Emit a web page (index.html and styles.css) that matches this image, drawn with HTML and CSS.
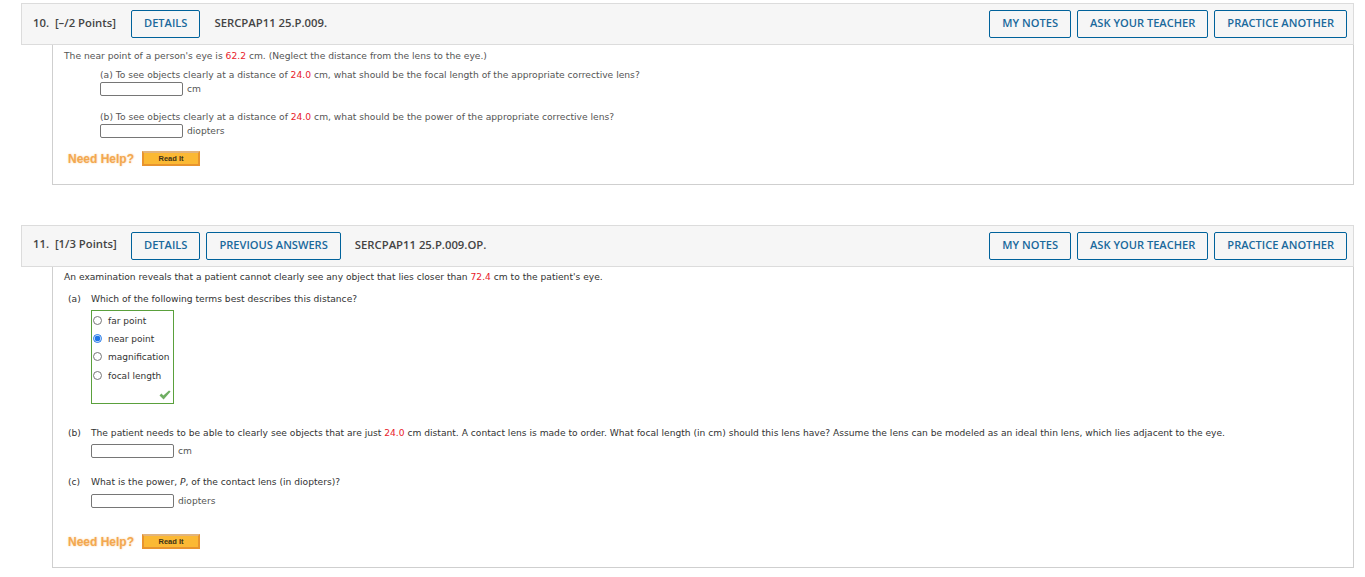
FILE: index.html
```html
<!DOCTYPE html>
<html lang="en">
<head>
<meta charset="utf-8">
<title>Questions</title>
<link rel="stylesheet" href="styles.css">
</head>
<body>
<section class="question q10">
  <header class="qhead">
    <span class="qnum">10.&nbsp; [–/2 Points]</span>
    <a class="btn">DETAILS</a>
    <span class="qcode">SERCPAP11 25.P.009.</span>
    <span class="spacer"></span>
    <a class="btn">MY NOTES</a>
    <a class="btn">ASK YOUR TEACHER</a>
    <a class="btn">PRACTICE ANOTHER</a>
  </header>
  <div class="qbody">
    <p class="intro">The near point of a person's eye is <b class="val">62.2</b> cm. (Neglect the distance from the lens to the eye.)</p>
    <div class="part-a1">
      <p class="ptext">(a) To see objects clearly at a distance of <b class="val">24.0</b> cm, what should be the focal length of the appropriate corrective lens?</p>
      <div class="ansline"><span class="field"></span><span class="unit">cm</span></div>
    </div>
    <div class="part-a2">
      <p class="ptext">(b) To see objects clearly at a distance of <b class="val">24.0</b> cm, what should be the power of the appropriate corrective lens?</p>
      <div class="ansline"><span class="field"></span><span class="unit">diopters</span></div>
    </div>
    <div class="help help1">
      <span class="need">Need Help?</span>
      <span class="readit"><span>Read It</span></span>
    </div>
  </div>
</section>

<section class="question q11">
  <header class="qhead">
    <span class="qnum">11.&nbsp; [1/3 Points]</span>
    <a class="btn">DETAILS</a>
    <a class="btn">PREVIOUS ANSWERS</a>
    <span class="qcode">SERCPAP11 25.P.009.OP.</span>
    <span class="spacer"></span>
    <a class="btn">MY NOTES</a>
    <a class="btn">ASK YOUR TEACHER</a>
    <a class="btn">PRACTICE ANOTHER</a>
  </header>
  <div class="qbody">
    <p class="intro dark">An examination reveals that a patient cannot clearly see any object that lies closer than <b class="val">72.4</b> cm to the patient's eye.</p>
    <div class="row row-a">
      <span class="plabel">(a)</span>
      <div class="pcontent">
        <p class="ptext dark">Which of the following terms best describes this distance?</p>
        <div class="choices">
          <label class="choice"><span class="radio"></span>far point</label>
          <label class="choice"><span class="radio on"></span>near point</label>
          <label class="choice"><span class="radio"></span>magnification</label>
          <label class="choice last"><span class="radio"></span>focal length</label>
          <svg class="check" viewBox="0 0 12 10" width="12" height="10"><path d="M0.5 5.4 L2.4 3.6 L4.4 5.4 L10 0.4 L11.6 1.6 L4.6 9.6 Z" fill="#6fae62"/></svg>
        </div>
      </div>
    </div>
    <div class="row row-b">
      <span class="plabel">(b)</span>
      <div class="pcontent">
        <p class="ptext dark">The patient needs to be able to clearly see objects that are just <b class="val">24.0</b> cm distant. A contact lens is made to order. What focal length (in cm) should this lens have? Assume the lens can be modeled as an ideal thin lens, which lies adjacent to the eye.</p>
        <div class="ansline gap"><span class="field"></span><span class="unit">cm</span></div>
      </div>
    </div>
    <div class="row row-c">
      <span class="plabel">(c)</span>
      <div class="pcontent">
        <p class="ptext dark">What is the power, <i>P</i>, of the contact lens (in diopters)?</p>
        <div class="ansline gap2"><span class="field"></span><span class="unit">diopters</span></div>
      </div>
    </div>
    <div class="help help2">
      <span class="need">Need Help?</span>
      <span class="readit"><span>Read It</span></span>
    </div>
  </div>
</section>
</body>
</html>
```
FILE: styles.css
```css
* { box-sizing: border-box; }
html, body { margin: 0; padding: 0; background: #fff; }
body {
  padding: 3px 11px 0 21px;
  font-family: "DejaVu Sans", Verdana, sans-serif;
  font-size: 9.17px;
  color: #555;
  overflow: hidden;
}
p { margin: 0; }
.question { display: block; }
.q11 { margin-top: 40px; font-size: 9.15px; }

.qhead {
  display: flex;
  align-items: center;
  height: 42px;
  padding: 0 6px 0 11px;
  gap: 6px;
  background: #f6f6f6;
  border: 1px solid #dcdcdc;
}
.qnum, .qcode {
  font-family: "Open Sans", sans-serif;
  font-size: 11.3px;
  font-weight: 600;
  color: #444;
}
.qnum { width: 92px; padding-bottom: 3px; white-space: nowrap; }
.q11 .qnum { padding-bottom: 5px; }
.qcode { margin-left: 8px; padding-bottom: 3px; }
.spacer { flex: 1; }
.btn {
  display: flex;
  align-items: center;
  height: 28px;
  padding: 0 12px 3px;
  font-family: "Open Sans", sans-serif;
  font-size: 11.1px;
  font-weight: 600;
  color: #1a699c;
  background: #f6f6f6;
  border: 1px solid #00629b;
  border-radius: 2px;
  white-space: nowrap;
}

.qbody {
  margin: 0 0 0 31px;
  padding: 0 0 0 11px;
  border: 1px solid #cfcfcf;
  border-top: 0;
  background: #fff;
}
.q10 .qbody { height: 140px; padding-top: 5px; }
.q11 .qbody { height: 301px; padding-top: 4px; }

.intro { line-height: 12px; }
.val { color: #e8212b; font-weight: normal; }
.dark { color: #333; }

.part-a1 { margin: 7px 0 0 36px; }
.part-a2 { margin: 15px 0 0 36px; }
.ptext { line-height: 12px; }
.ansline { display: flex; align-items: center; gap: 4px; height: 14px; margin-top: 1px; }
.unit { margin-top: -1px; }
.field {
  display: block;
  width: 83px;
  height: 14px;
  background: #fff;
  border: 1px solid #767676;
  border-radius: 2px;
}

.help { display: flex; align-items: center; gap: 8px; margin-left: 4px; height: 15px; }
.help1 { margin-top: 13px; }
.help2 { margin-top: 26px; }
.need {
  font-family: "Liberation Sans", Arial, sans-serif;
  font-size: 12px;
  font-weight: bold;
  color: #f3a850;
  text-shadow: 0 0 2px #f7c98f;
}
.readit {
  display: flex;
  align-items: center;
  justify-content: center;
  width: 58px;
  height: 15px;
  background: #fbb934;
  border: 2px solid #e8942e;
  border-top-color: #e2b47c;
  font-family: "Liberation Sans", Arial, sans-serif;
  font-size: 7.5px;
  font-weight: bold;
  color: #3f3116;
}

.row { display: flex; margin-left: 4px; }
.plabel { width: 23px; line-height: 12px; color: #333; flex: none; }
.pcontent { flex: 1; min-width: 0; }
.row-a { margin-top: 10px; }
.row-b { margin-top: 23px; }
.row-c { margin-top: 18px; }
.ansline.gap { margin-top: 5px; }
.ansline.gap2 { margin-top: 6px; }

.choices {
  position: relative;
  width: 83px;
  height: 94px;
  margin-top: 5px;
  padding: 1px 0 0 1px;
  border: 1px solid #5aa03c;
  color: #333;
  font-size: 9px;
}
.choice { display: flex; align-items: center; gap: 6px; height: 18px; }
.choice.last { margin-top: 1px; }
.radio {
  display: block;
  width: 9px;
  height: 9px;
  margin-top: -2px;
  border: 1px solid #777;
  border-radius: 50%;
  background: #fff;
  flex: none;
}
.radio.on {
  border: 1px solid #1f76e8;
  background: radial-gradient(circle, #1f76e8 0 2.6px, #fff 3.2px);
}
.check { position: absolute; right: 2px; bottom: 3px; }
```
